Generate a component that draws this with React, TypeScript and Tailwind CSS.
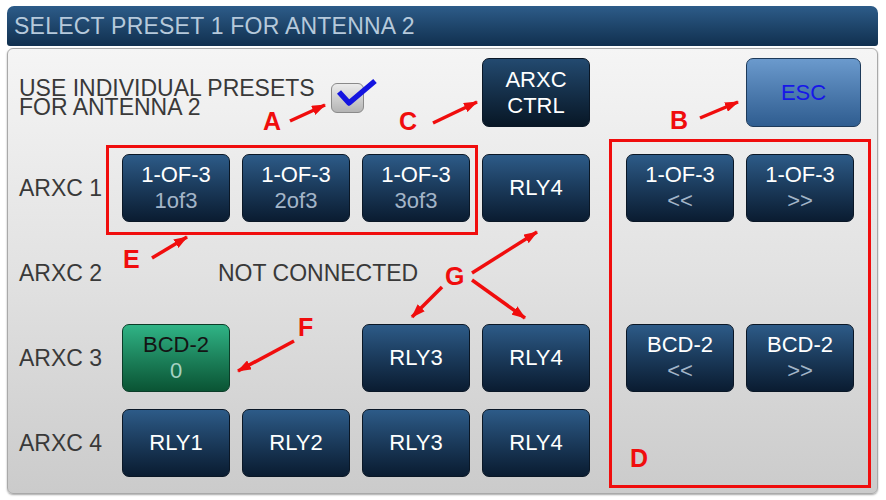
import React from 'react';

type BtnProps = { top: string; bottom?: string; green?: boolean };

const Btn = ({ top, bottom, green }: BtnProps) => {
  if (green) {
    return (
      <div className="flex w-[108px] flex-col items-center justify-center rounded-[7px] border border-[#0b3d28] bg-gradient-to-b from-[#30b486] to-[#0a5434] text-[22px] leading-[26px]">
        <span className="text-[#141414]">{top}</span>
        <span className="text-[#a6d2c2]">{bottom}</span>
      </div>
    );
  }
  return (
    <div className="flex w-[108px] flex-col items-center justify-center rounded-[7px] border border-[#0a1726] bg-gradient-to-b from-[#2d5b88] to-[#0a1c31] text-[22px] leading-[26px]">
      <span className="text-white">{top}</span>
      {bottom && <span className="text-[#a3b5c8]">{bottom}</span>}
    </div>
  );
};

const Label = ({ children }: { children: React.ReactNode }) => (
  <div className="self-center text-[23px] text-[#393939]">{children}</div>
);

// red marks drawn over the screen
const arrows: [number, number, number, number][] = [
  [290, 121, 325, 105],
  [433, 123, 477, 102],
  [700, 118, 738, 102],
  [152, 258, 187, 237],
  [294, 341, 238, 371],
  [472, 273, 537, 232],
  [442, 287, 412, 317],
  [472, 280, 525, 318],
];

const letters: [string, number, number][] = [
  ['A', 263, 130],
  ['C', 399, 130],
  ['B', 670, 129],
  ['E', 123, 268],
  ['F', 298, 336],
  ['G', 445, 285],
  ['D', 630, 467],
];

const Marks = () => (
  <svg className="pointer-events-none absolute left-0 top-0" width={886} height={500}>
    <defs>
      <marker
        id="head"
        viewBox="0 0 14 10"
        refX={13}
        refY={5}
        markerWidth={14}
        markerHeight={10}
        markerUnits="userSpaceOnUse"
        orient="auto"
      >
        <path d="M0,0 L14,5 L0,10 z" fill="#f00d0d" />
      </marker>
    </defs>
    <rect x={107.5} y={146.5} width={369} height={87} fill="none" stroke="#f00d0d" strokeWidth={3} />
    <rect x={610.5} y={140.5} width={259} height={346} fill="none" stroke="#f00d0d" strokeWidth={3} />
    {arrows.map(([x1, y1, x2, y2], i) => (
      <line key={i} x1={x1} y1={y1} x2={x2} y2={y2} stroke="#f00d0d" strokeWidth={3.5} markerEnd="url(#head)" />
    ))}
    {letters.map(([t, x, y]) => (
      <text
        key={t}
        x={x}
        y={y}
        fill="#f00d0d"
        fontSize={25}
        fontWeight={700}
        fontFamily="'Liberation Sans', Arial, sans-serif"
      >
        {t}
      </text>
    ))}
  </svg>
);

export default function App() {
  return (
    <div className="relative h-[500px] w-[886px] bg-white pl-[7px] pr-[8px] pt-[6px] font-['Liberation_Sans',Arial,sans-serif]">
      <div className="flex h-[40px] items-center rounded-t-[7px] rounded-b-[3px] bg-gradient-to-b from-[#2d5c89] to-[#11304f] pl-[7px] text-[23px] tracking-[0.01em] text-[#b6c9db]">
        SELECT PRESET 1 FOR ANTENNA 2
      </div>

      <div className="mt-[2px] h-[446px] rounded-[6px] border border-[#a9a9a9] bg-gradient-to-b from-[#f5f5f5] via-[#e2e2e2] to-[#cbcbcb] pl-[11px] pt-[9px] shadow-[0_1px_2px_rgba(0,0,0,0.35)]">
        <div className="mb-[27px] grid h-[69px] grid-cols-[91px_108px_108px_108px_108px_12px_108px_115px] gap-x-3">
          <div className="col-span-4 flex items-center pt-[11px]">
            <div className="text-[23px] leading-[19px] text-[#393939]">
              <div>USE INDIVIDUAL PRESETS</div>
              <div>FOR ANTENNA 2</div>
            </div>
            <div className="relative ml-[16px] h-[30px] w-[33px] rounded-[6px] border border-[#8a8a8a] bg-gradient-to-b from-[#ececec] to-[#b4b4b4]">
              <svg className="absolute left-[4px] top-[-5px] overflow-visible" width={42} height={28}>
                <path d="M3,13 L13,24 L39,2" fill="none" stroke="#1414e0" strokeWidth={5.5} strokeLinejoin="round" />
              </svg>
            </div>
          </div>
          <div className="flex w-[108px] flex-col items-center justify-center rounded-[7px] border border-[#0a1726] bg-gradient-to-b from-[#234a70] to-[#081726] text-[22px] leading-[26px] text-white">
            <span>ARXC</span>
            <span>CTRL</span>
          </div>
          <div />
          <div />
          <div className="flex items-center justify-center rounded-[7px] border border-[#1d3a5a] bg-gradient-to-b from-[#6b9acd] to-[#2f5d90] text-[22px] text-[#1717e8]">
            ESC
          </div>
        </div>

        <div className="grid grid-cols-[91px_108px_108px_108px_108px_12px_108px_115px] grid-rows-[68px_68px_68px_68px] gap-x-3 gap-y-[17px]">
          <Label>ARXC 1</Label>
          <Btn top="1-OF-3" bottom="1of3" />
          <Btn top="1-OF-3" bottom="2of3" />
          <Btn top="1-OF-3" bottom="3of3" />
          <Btn top="RLY4" />
          <div />
          <Btn top="1-OF-3" bottom="<<" />
          <Btn top="1-OF-3" bottom=">>" />

          <Label>ARXC 2</Label>
          <div className="col-span-3 self-center pl-[96px] text-[23px] text-[#393939]">NOT CONNECTED</div>
          <div />
          <div />
          <div />
          <div />

          <Label>ARXC 3</Label>
          <Btn top="BCD-2" bottom="0" green />
          <div />
          <Btn top="RLY3" />
          <Btn top="RLY4" />
          <div />
          <Btn top="BCD-2" bottom="<<" />
          <Btn top="BCD-2" bottom=">>" />

          <Label>ARXC 4</Label>
          <Btn top="RLY1" />
          <Btn top="RLY2" />
          <Btn top="RLY3" />
          <Btn top="RLY4" />
        </div>
      </div>

      <Marks />
    </div>
  );
}
